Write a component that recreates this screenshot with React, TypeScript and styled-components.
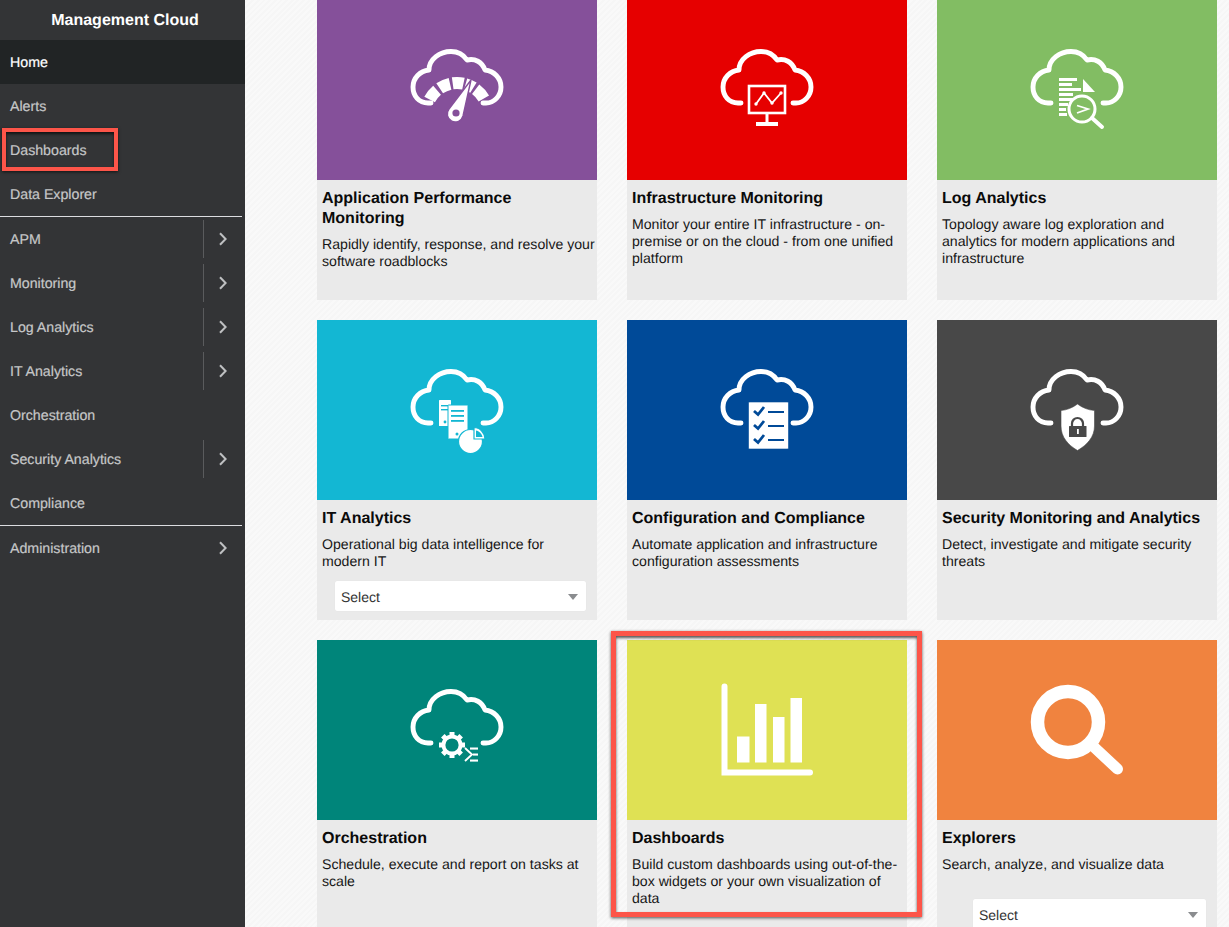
import React from 'react';
import styled, { createGlobalStyle } from 'styled-components';

const GlobalStyle = createGlobalStyle`
  html, body {
    margin: 0;
    padding: 0;
    height: 100%;
    overflow: hidden;
  }

  body {
    font-family: "Liberation Sans", Arial, sans-serif;
    background: #f8f8f8;
    text-rendering: geometricPrecision;
  }

  * {
    box-sizing: border-box;
  }
`;

const Page = styled.div`
  position: relative;
  display: flex;
  height: 100vh;
  overflow: hidden;
  background: repeating-linear-gradient(135deg, #f9f9f9 0 2px, #f6f6f6 2px 4px);
`;

const Sidebar = styled.nav`
  flex: 0 0 245px;
  background: #333436;
`;

const Brand = styled.div`
  height: 40px;
  padding: 1px 0 0 5px;
  display: flex;
  align-items: center;
  justify-content: center;
  color: #fff;
  font-size: 16px;
  font-weight: 700;
`;

const MenuRow = styled.a<{ $active?: boolean }>`
  display: flex;
  align-items: center;
  height: 44px;
  padding: 1px 0 0 10px;
  font-size: 14.2px;
  color: ${(p) => (p.$active ? '#fff' : '#c6c7c8')};
  background: ${(p) => (p.$active ? '#212425' : 'transparent')};
  -webkit-text-stroke: 0.2px ${(p) => (p.$active ? '#fff' : '#c6c7c8')};
`;

const MenuLabel = styled.span`
  flex: 1;
`;

const Expander = styled.span<{ $divided?: boolean }>`
  flex: 0 0 42px;
  height: 38px;
  margin-top: -1px;
  display: flex;
  align-items: center;
  justify-content: flex-end;
  padding-right: 18px;
  border-left: 1px solid ${(p) => (p.$divided ? '#5a5b5d' : 'transparent')};
`;

const MenuDivider = styled.div`
  height: 1px;
  width: 242px;
  background: #dcdde0;
`;

const Content = styled.main`
  flex: 1;
  padding-left: 72px;
  display: grid;
  grid-template-columns: repeat(3, 280px);
  grid-auto-rows: 300px;
  gap: 20px 30px;
`;

const Card = styled.article`
  display: flex;
  flex-direction: column;
  background: #eaeaea;
`;

const Tile = styled.div<{ $color: string }>`
  flex: 0 0 180px;
  display: flex;
  align-items: center;
  justify-content: center;
  background: ${(p) => p.$color};
`;

const CardBody = styled.div`
  flex: 1;
  display: flex;
  flex-direction: column;
  padding: 9px 1px 0 5px;
`;

const CardTitle = styled.h3`
  margin: 0 0 7px;
  font-size: 16px;
  line-height: 20px;
  font-weight: 700;
  color: #0a0a0a;
`;

const CardText = styled.p`
  margin: 0;
  font-size: 14.12px;
  line-height: 17px;
  color: #161616;
  white-space: pre-line;
`;

const Select = styled.div<{ $indent: number; $bottom: number }>`
  margin: auto 10px ${(p) => p.$bottom}px ${(p) => p.$indent}px;
  height: 30px;
  flex: 0 0 30px;
  display: flex;
  align-items: center;
  justify-content: space-between;
  padding: 1px 8px 0 6px;
  background: #fff;
  border-radius: 2px;
  box-shadow: 0 0 1px rgba(0, 0, 0, 0.08);
  font-size: 14px;
  color: #333;
`;

const Caret = styled.span`
  width: 0;
  height: 0;
  border-left: 5px solid transparent;
  border-right: 5px solid transparent;
  border-top: 6px solid #8a8c8f;
  margin-top: 1px;
`;

const Callout = styled.div<{ $left: number; $top: number; $w: number; $h: number; $border: number }>`
  position: absolute;
  left: ${(p) => p.$left}px;
  top: ${(p) => p.$top}px;
  width: ${(p) => p.$w}px;
  height: ${(p) => p.$h}px;
  border: ${(p) => p.$border}px solid #fd5549;
  box-shadow: 0 1px 3px rgba(0, 0, 0, 0.65), inset 0 2px 3px rgba(0, 0, 0, 0.65);
  pointer-events: none;
`;

const Chevron = () => (
  <svg width="8" height="14" viewBox="0 0 8 14">
    <path d="M1 1.2 6.6 7 1 12.8" fill="none" stroke="#bfc0c2" strokeWidth="2" />
  </svg>
);

const IconSvg: React.FC<{ children: React.ReactNode }> = ({ children }) => (
  <svg width="120" height="100" viewBox="0 0 120 100">
    {children}
  </svg>
);

const Cloud = () => (
  <path
    d="M34 63 H31 C22 63 16 56 16 47 C16 38 23 31 32 30 C32 19 43 11.5 54 11.5 C61 11.5 66 14 70 20 C78 18 85 22 88 30 C97 31 104 38 104 47 C104 56 97 63 89 63 H86"
    fill="none"
    stroke="#fff"
    strokeWidth="4.9"
    strokeLinecap="round"
    strokeLinejoin="round"
  />
);

const polar = (cx: number, cy: number, r: number, deg: number) => {
  const a = (deg * Math.PI) / 180;
  return `${(cx + r * Math.sin(a)).toFixed(2)} ${(cy - r * Math.cos(a)).toFixed(2)}`;
};

const GaugeIcon = ({ bg }: { bg: string }) => (
  <IconSvg>
    <Cloud />
    {[
      [-62, -40],
      [-34, -13],
      [-8, 12],
      [16, 32],
      [37, 60],
    ].map(([a, b]) => (
      <path
        key={a}
        d={`M${polar(60, 74, 31, a)} A31 31 0 0 1 ${polar(60, 74, 31, b)}`}
        fill="none"
        stroke="#fff"
        strokeWidth="12"
      />
    ))}
    <path d="M74 40 L52 69 A8 8 0 1 0 66 76 Z" fill="#fff" stroke={bg} strokeWidth="1.4" />
    <circle cx="59" cy="73" r="3.6" fill={bg} />
  </IconSvg>
);

const MonitorIcon = ({ bg }: { bg: string }) => (
  <IconSvg>
    <Cloud />
    <rect x="42" y="46" width="36" height="27" fill={bg} stroke="#fff" strokeWidth="2.6" />
    <polyline points="49,64 57,53 65,63 74,53" fill="none" stroke="#fff" strokeWidth="1.8" />
    {[
      [49, 64],
      [57, 53],
      [65, 63],
      [74, 53],
    ].map(([x, y]) => (
      <circle key={x} cx={x} cy={y} r="1.7" fill="#fff" />
    ))}
    <rect x="58.5" y="74" width="3" height="8" fill="#fff" />
    <rect x="49" y="82" width="22" height="4" fill="#fff" />
  </IconSvg>
);

const LogIcon = ({ bg }: { bg: string }) => (
  <IconSvg>
    <Cloud />
    {[
      [38, 18],
      [43, 13],
      [48, 22],
      [53, 14],
      [58, 15],
      [63, 9],
      [68, 7],
      [73, 8],
    ].map(([y, w]) => (
      <rect key={y} x="42" y={y} width={w} height="3" fill="#fff" />
    ))}
    <path d="M66 39 L78 52 H66 Z" fill="#fff" />
    <circle cx="65" cy="69" r="13" fill={bg} stroke="#fff" strokeWidth="3" />
    <path d="M60 65.5 71 69 60 73" fill="none" stroke="#fff" strokeWidth="1.8" />
    <path d="M75 78 85 87" stroke="#fff" strokeWidth="4" strokeLinecap="round" />
  </IconSvg>
);

const AnalyticsIcon = ({ bg }: { bg: string }) => (
  <IconSvg>
    <Cloud />
    <rect x="42" y="40" width="12" height="26" rx="0.5" fill="#fff" />
    <rect x="44" y="45" width="8" height="1.4" fill={bg} />
    <rect x="44" y="49" width="8" height="1.4" fill={bg} />
    <circle cx="48" cy="62" r="1.4" fill={bg} />
    <rect x="51" y="45" width="20" height="34" rx="0.5" fill="#fff" stroke={bg} strokeWidth="1" />
    <rect x="54" y="50" width="13" height="1.8" fill={bg} />
    <rect x="54" y="55" width="13" height="1.8" fill={bg} />
    <rect x="54" y="60" width="13" height="1.8" fill={bg} />
    <circle cx="60" cy="74" r="1.5" fill={bg} />
    <circle cx="73.5" cy="81.5" r="12" fill="#fff" stroke={bg} strokeWidth="1.2" />
    <path d="M77 67.5 C83 67.5 88 73 88 79 H77 Z" fill="#fff" stroke={bg} strokeWidth="1.2" />
    <path d="M79 70.5 C82 71 85 74 85.5 77 H79 Z" fill={bg} />
  </IconSvg>
);

const ChecklistIcon = ({ bg }: { bg: string }) => (
  <IconSvg>
    <Cloud />
    <rect x="41.5" y="42" width="40" height="47" rx="1" fill="#fff" stroke={bg} strokeWidth="0.6" />
    {[50, 64, 78].map((y) => (
      <g key={y}>
        <path
          d={`M47 ${y + 1} L51 ${y + 4.5} L57 ${y - 3}`}
          fill="none"
          stroke={bg}
          strokeWidth="2.8"
        />
        <rect x="61" y={y + 1} width="16" height="2" fill={bg} />
      </g>
    ))}
  </IconSvg>
);

const ShieldIcon = ({ bg }: { bg: string }) => (
  <IconSvg>
    <Cloud />
    <path
      d="M60.5 44 C66 48 71 50 77.5 50.5 V66 C77.5 77 70 85 60.5 90.5 C51 85 44 77 44 66 V50.5 C50 50 55 48 60.5 44 Z"
      fill="#fff"
      stroke={bg}
      strokeWidth="0.6"
    />
    <path d="M55 66 V63.5 A5.5 5.5 0 0 1 66 63.5 V66" fill="none" stroke={bg} strokeWidth="2.2" />
    <rect x="52" y="66" width="17.5" height="11" rx="0.5" fill={bg} />
    <rect x="60" y="69" width="1.8" height="5" fill="#fff" />
  </IconSvg>
);

const GearIcon = ({ bg }: { bg: string }) => (
  <IconSvg>
    <Cloud />
    <circle cx="55" cy="65" r="15" fill={bg} />
    {[0, 45, 90, 135].map((a) => (
      <rect key={a} x="52.5" y="52" width="5" height="26" fill="#fff" transform={`rotate(${a} 55 65)`} />
    ))}
    <circle cx="55" cy="65" r="10.5" fill="#fff" />
    <circle cx="55" cy="65" r="6.6" fill={bg} />
    <path d="M68 68 75 74.5 68 81" fill="none" stroke="#fff" strokeWidth="1.9" />
    <rect x="73" y="67.5" width="8" height="2.1" fill="#fff" />
    <rect x="76" y="73.5" width="5" height="2.1" fill="#fff" />
    <rect x="73" y="79.5" width="8" height="2.1" fill="#fff" />
  </IconSvg>
);

const ChartIcon = () => (
  <IconSvg>
    <path d="M17.5 6.5 V92.5 H103" fill="none" stroke="#fff" strokeWidth="6" strokeLinecap="round" />
    <rect x="30" y="56.5" width="12.5" height="26" fill="#fff" />
    <rect x="48" y="24" width="11.5" height="58.5" fill="#fff" />
    <rect x="66" y="37" width="11.5" height="45.5" fill="#fff" />
    <rect x="83.5" y="18" width="11.5" height="64.5" fill="#fff" />
  </IconSvg>
);

const SearchIcon = () => (
  <IconSvg>
    <circle cx="51" cy="42" r="30.5" fill="none" stroke="#fff" strokeWidth="13.5" />
    <path d="M78 68 100.5 89" stroke="#fff" strokeWidth="11" strokeLinecap="round" />
  </IconSvg>
);

const menuTop = [
  { label: 'Home', active: true },
  { label: 'Alerts' },
  { label: 'Dashboards' },
  { label: 'Data Explorer' },
];

const menuMiddle = [
  { label: 'APM', more: true },
  { label: 'Monitoring', more: true },
  { label: 'Log Analytics', more: true },
  { label: 'IT Analytics', more: true },
  { label: 'Orchestration' },
  { label: 'Security Analytics', more: true },
  { label: 'Compliance' },
];

const cards = [
  {
    title: 'Application Performance Monitoring',
    text: 'Rapidly identify, response, and resolve your software roadblocks',
    color: '#85509a',
    icon: <GaugeIcon bg="#85509a" />,
  },
  {
    title: 'Infrastructure Monitoring',
    text: 'Monitor your entire IT infrastructure - on-premise or on the cloud - from one unified platform',
    color: '#e60000',
    icon: <MonitorIcon bg="#e60000" />,
  },
  {
    title: 'Log Analytics',
    text: 'Topology aware log exploration and analytics for modern applications and infrastructure',
    color: '#82bd63',
    icon: <LogIcon bg="#82bd63" />,
  },
  {
    title: 'IT Analytics',
    text: 'Operational big data intelligence for\nmodern IT',
    color: '#13b7d3',
    icon: <AnalyticsIcon bg="#13b7d3" />,
    select: { indent: 13, bottom: 9 },
  },
  {
    title: 'Configuration and Compliance',
    text: 'Automate application and infrastructure configuration assessments',
    color: '#004a98',
    icon: <ChecklistIcon bg="#004a98" />,
  },
  {
    title: 'Security Monitoring and Analytics',
    text: 'Detect, investigate and mitigate security threats',
    color: '#484848',
    icon: <ShieldIcon bg="#484848" />,
  },
  {
    title: 'Orchestration',
    text: 'Schedule, execute and report on tasks at scale',
    color: '#00857a',
    icon: <GearIcon bg="#00857a" />,
  },
  {
    title: 'Dashboards',
    text: 'Build custom dashboards using out-of-the-box widgets or your own visualization of data',
    color: '#dfe154',
    icon: <ChartIcon />,
  },
  {
    title: 'Explorers',
    text: 'Search, analyze, and visualize data',
    color: '#f0833f',
    icon: <SearchIcon />,
    select: { indent: 31, bottom: 11 },
  },
];

const App: React.FC = () => (
  <>
    <GlobalStyle />
    <Page>
      <Sidebar>
        <Brand>Management Cloud</Brand>
        {menuTop.map((item) => (
          <MenuRow key={item.label} $active={item.active}>
            <MenuLabel>{item.label}</MenuLabel>
          </MenuRow>
        ))}
        <MenuDivider />
        {menuMiddle.map((item) => (
          <MenuRow key={item.label}>
            <MenuLabel>{item.label}</MenuLabel>
            {item.more && (
              <Expander $divided>
                <Chevron />
              </Expander>
            )}
          </MenuRow>
        ))}
        <MenuDivider />
        <MenuRow>
          <MenuLabel>Administration</MenuLabel>
          <Expander>
            <Chevron />
          </Expander>
        </MenuRow>
      </Sidebar>
      <Content>
        {cards.map((card) => (
          <Card key={card.title}>
            <Tile $color={card.color}>{card.icon}</Tile>
            <CardBody>
              <CardTitle>{card.title}</CardTitle>
              <CardText>{card.text}</CardText>
              {card.select && (
                <Select $indent={card.select.indent} $bottom={card.select.bottom}>
                  Select
                  <Caret />
                </Select>
              )}
            </CardBody>
          </Card>
        ))}
      </Content>
      <Callout $left={2} $top={128} $w={116} $h={43} $border={4} />
      <Callout $left={611} $top={631} $w={311} $h={286} $border={5} />
    </Page>
  </>
);

export default App;
